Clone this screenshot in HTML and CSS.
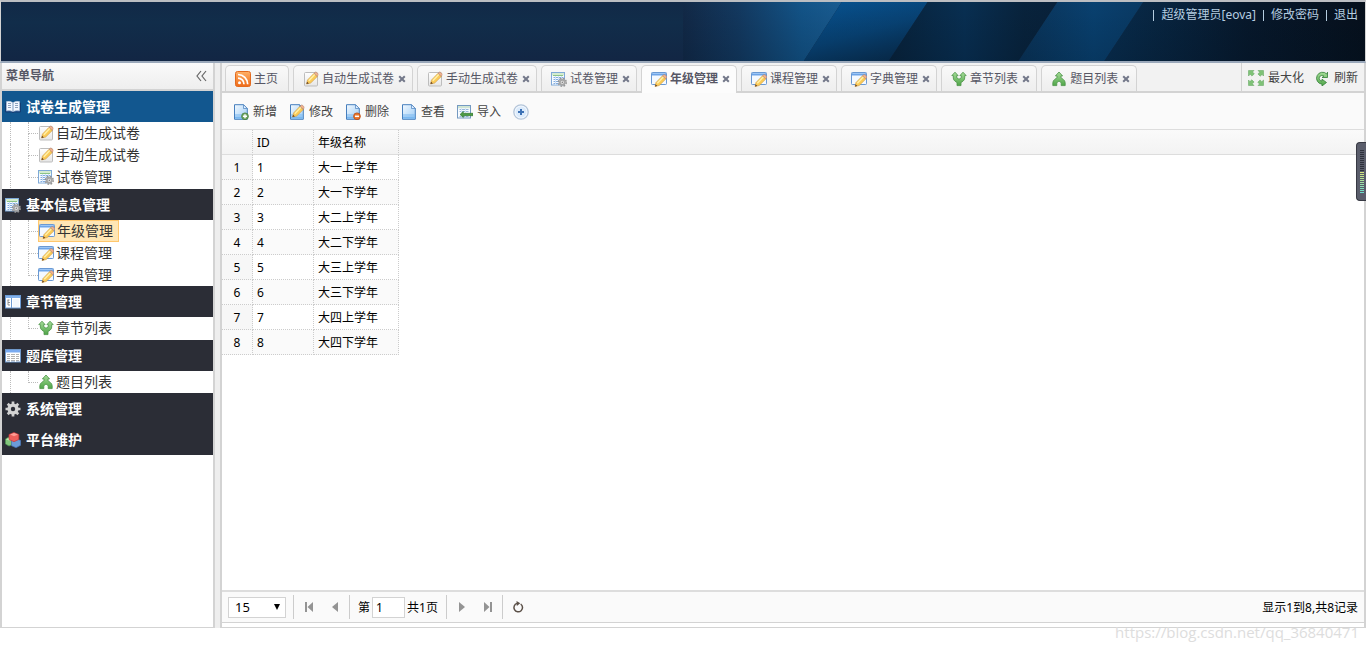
FILE: index.html
```html
<!DOCTYPE html>
<html lang="zh-CN">
<head>
<meta charset="utf-8">
<title>年级管理</title>
<link rel="stylesheet" href="styles.css">
</head>
<body>
<svg class="sprite" aria-hidden="true">
  <defs>
    <linearGradient id="g-paper" x1="0" y1="0" x2="0" y2="1"><stop offset="0" stop-color="#fff"/><stop offset="1" stop-color="#e6e6e6"/></linearGradient>
    <linearGradient id="g-blue" x1="0" y1="0" x2="1" y2="1"><stop offset="0" stop-color="#f2f9ff"/><stop offset="1" stop-color="#9ccbf5"/></linearGradient>
    <linearGradient id="g-green" x1="0" y1="0" x2="0" y2="1"><stop offset="0" stop-color="#a5dc98"/><stop offset="1" stop-color="#4fa548"/></linearGradient>
    <linearGradient id="g-orange" x1="0" y1="0" x2="0" y2="1"><stop offset="0" stop-color="#ffb168"/><stop offset="1" stop-color="#ee6a18"/></linearGradient>
  </defs>
  <symbol id="pencil" viewBox="0 0 16 16">
    <path d="M4 15 5 11 11.500 4.300l3.300 3.200L8.200 14z" fill="#fbcb58" stroke="#cf9a41" stroke-width=".6"/>
    <path d="m6.300 11.700 6.200-6.400" stroke="#fff0a8" stroke-width="1.500"/>
    <path d="m11.500 4.300 1.200-1.100q.7-.5 1.400.1l1.500 1.500q.5.700 0 1.400l-.8 1.300z" fill="#efb08e" stroke="#a97c66" stroke-width=".5"/>
    <path d="M4 15l.6-2.300 1.800 1.700z" fill="#664328"/>
  </symbol>
  <symbol id="note" viewBox="0 0 16 16">
    <rect x="1.500" y="1.500" width="13" height="13.500" rx="1" fill="url(#g-paper)" stroke="#bdbdbd"/>
    <use href="#pencil" transform="translate(-.5 -2)"/>
  </symbol>
  <symbol id="tablegear" viewBox="0 0 16 16">
    <rect x=".5" y="1.500" width="13" height="12.500" fill="#f7fbff" stroke="#7fa9d8"/>
    <path d="M1 2h12v2.500H1z" fill="#d4ecd0"/><path d="M2 4.500h10" stroke="#8cc487"/>
    <path d="M2.500 6.500h10M2.500 8.500h10M2.500 10.500h10M2.500 12.500h10" stroke="#83ade0"/><path d="M4.500 5v9M7.500 5v9M10.500 5v9" stroke="#cfe1f6"/>
    <circle cx="11.300" cy="11.300" r="3.900" fill="none" stroke="#949494" stroke-width="1.600" stroke-dasharray="1.700 1.360"/>
    <circle cx="11.300" cy="11.300" r="2.500" fill="#eee" stroke="#a6a6a6" stroke-width="1.900"/><circle cx="11.300" cy="11.300" r=".8" fill="#777"/>
  </symbol>
  <symbol id="winedit" viewBox="0 0 16 16">
    <rect x=".5" y="1.500" width="15" height="12" rx=".8" fill="#f4f9ff" stroke="#6a99d3"/>
    <path d="M1 2h14v2.500H1z" fill="#6ea5e8"/><path d="M1.500 2.500h13" stroke="#9dc6f5"/>
    <use href="#pencil" transform="translate(0 .5)"/>
  </symbol>
  <symbol id="book" viewBox="0 0 16 16">
    <path d="M.5 4v9h6.300l1.200.8 1.200-.8h6.300V4z" fill="#315f9c" stroke="#143d73"/>
    <path d="M1.500 2.500Q5 1.800 7.700 3.500v9Q5 11 1.500 11.800zM14.500 2.500Q11 1.800 8.300 3.500v9Q11 11 14.500 11.800z" fill="#f4f8ff" stroke="#b9c9dd" stroke-width=".5"/>
    <path d="M3 4.500h3M3 6.500h3M3 8.500h3M10 4.500h3M10 6.500h3M10 8.500h3" stroke="#8ea3be"/>
  </symbol>
  <symbol id="layout" viewBox="0 0 16 16">
    <rect x=".5" y="1.500" width="15" height="12.500" fill="#fff" stroke="#6c9bd4"/><path d="M1 2h14v2H1z" fill="#82b1ec"/>
    <path d="M6.500 4v10" stroke="#6c9bd4"/><path d="M2.500 6h2M3 6v5M3 8.500h2M3 11h2" stroke="#777" stroke-width=".8" fill="none"/>
    <path d="M8 5h6v8H8z" fill="#f2f7fd"/>
  </symbol>
  <symbol id="table" viewBox="0 0 16 16">
    <rect x=".5" y="1.500" width="15" height="12.500" fill="#fff" stroke="#7099ca"/><path d="M1 2h14v2.500H1z" fill="#79aaf0"/>
    <path d="M2 6.500h12M2 8.500h12M2 10.500h12M2 12.500h12" stroke="#b2b2b2"/><path d="M5.500 5v9M10.500 5v9" stroke="#fff"/>
  </symbol>
  <symbol id="gear" viewBox="0 0 16 16">
    <path d="M8 .5v15M.5 8h15M2.700 2.700l10.600 10.600M13.300 2.700 2.700 13.300" stroke="#cfcfcf" stroke-width="2.700"/>
    <circle cx="8" cy="8" r="4" fill="none" stroke="#d4d4d4" stroke-width="3.200"/><circle cx="8" cy="8" r="2.200" fill="#2b2d36"/>
  </symbol>
  <symbol id="bricks" viewBox="0 0 16 16">
    <path d="m.5 7 3.500-2 3.500 2v5.500L4 14 .5 12z" fill="#83c67c" stroke="#4c9650" stroke-width=".7"/><path d="m1 7.200 3-1.500 3 1.500-3 1.300z" fill="#c5ebbb"/>
    <path d="m6.500 8.500 4.500-2 4.700 2v4.800L11 15.700l-4.500-2z" fill="#6c9bd8" stroke="#4270b0" stroke-width=".7"/>
    <path d="m4 2.500 5-2 4.800 2v5L9 9.700 4 7.500z" fill="#ee5f5b" stroke="#c43a3e" stroke-width=".7"/><path d="m5 2.600 4-1.500 4 1.500-4 1.700z" fill="#ff9c93"/>
  </symbol>
  <symbol id="split" viewBox="0 0 16 16">
    <path d="M4 1.200.8 4.600h1.500V7q0 2 1.700 3.200l2 1.400v3h4v-3l2-1.400q1.700-1.200 1.700-3.200V4.600h1.500L12 1.200 8.900 4.600h1.400v2L8 8.300 5.700 6.600v-2h1.400z" fill="url(#g-green)" stroke="#4b9348" stroke-width=".8" stroke-linejoin="round"/>
  </symbol>
  <symbol id="merge" viewBox="0 0 16 16">
    <path d="m8 1 3.600 3.900H10v1.800l2.300 1.700q1.900 1.400 1.900 3.600v2.600h-4V12.300q0-.6-.6-1L8 10l-1.600 1.300q-.6.400-.6 1v2.300h-4V12q0-2.200 1.900-3.600L6 6.700V4.900H4.400z" fill="url(#g-green)" stroke="#4b9348" stroke-width=".8" stroke-linejoin="round"/>
  </symbol>
  <symbol id="rss" viewBox="0 0 16 16">
    <rect x=".5" y=".5" width="15" height="15" rx="2" fill="url(#g-orange)" stroke="#e36a1e"/>
    <circle cx="4.500" cy="11.700" r="1.500" fill="#fff"/><path d="M3 7.200a6 6 0 0 1 6 6M3 3.500a9.700 9.700 0 0 1 9.700 9.700" fill="none" stroke="#fff" stroke-width="1.700"/>
  </symbol>
  <symbol id="page" viewBox="0 0 16 16">
    <path d="M1.500.7h9l3.800 3.800v10.800H1.500z" fill="url(#g-blue)" stroke="#477fbd"/><path d="M10.500.7v3.800h3.800z" fill="#e4f1ff" stroke="#477fbd" stroke-width=".7"/>
    <path d="M2 10.500h12v1H2zM2 12.500h12v2.300H2z" fill="#7ab8f0"/>
  </symbol>
  <symbol id="pageadd" viewBox="0 0 16 16">
    <use href="#page"/><circle cx="12" cy="12.300" r="3.400" fill="#73a865" stroke="#477f3f" stroke-width=".8"/><path d="M12 10.300v4M10 12.300h4" stroke="#fff" stroke-width="1.400"/>
  </symbol>
  <symbol id="pageedit" viewBox="0 0 16 16"><use href="#page"/><use href="#pencil" transform="translate(-.5 -2)"/></symbol>
  <symbol id="pagedel" viewBox="0 0 16 16">
    <use href="#page"/><circle cx="12" cy="12.300" r="3.400" fill="#e9742b" stroke="#b84e18" stroke-width=".8"/><path d="M10 12.300h4" stroke="#fff" stroke-width="1.500"/>
  </symbol>
  <symbol id="import" viewBox="0 0 16 16">
    <rect x=".5" y="1.500" width="13" height="12.500" fill="#f7fbff" stroke="#7499c1"/><path d="M1 2h12v2.200H1z" fill="#cfe5d4"/>
    <path d="M2.500 5.500h9M2.500 7.500h9M2.500 12.500h9" stroke="#97b8dd"/><path d="M4.500 4v9M8.500 4v9" stroke="#d9e7f7"/>
    <path d="M3 10.500 6.300 7.500v1.800H16v2.400H6.300v1.800z" fill="#4d9b43" stroke="#2c712b" stroke-width=".6"/>
  </symbol>
  <symbol id="plus" viewBox="0 0 16 16">
    <circle cx="8" cy="8" r="7.200" fill="#f3f8fe" stroke="#b4c5d9" stroke-width="1.300"/><circle cx="8" cy="8" r="5.500" fill="#dcebfb"/><path d="M8 5v6M5 8h6" stroke="#3e72b5" stroke-width="2"/>
  </symbol>
  <symbol id="expand" viewBox="0 0 16 16">
    <path d="M.5.500H6L4.500 2 6.300 3.800 4 6.100 2.200 4.300.5 6zM15.500.500V6L14 4.500l-1.800 1.700L9.900 3.900l1.800-1.700L10 .5zM.5 15.500V10L2 11.500l1.800-1.700 2.300 2.300-1.800 1.700L6 15.500zM15.500 15.500H10l1.500-1.500-1.700-1.800 2.300-2.300 1.700 1.800 1.700-1.700z" fill="#7fc277" stroke="#5ca35a" stroke-width=".5"/>
  </symbol>
  <symbol id="reload" viewBox="0 0 16 16">
    <path d="M12.800 4A6 6 0 1 0 8 14.200V16l4.500-3.500L8 9.200V11a2.800 2.800 0 1 1 1.900-4.900L8 7.500h5.500V2.200z" fill="url(#g-green)" stroke="#317f36" stroke-width=".8" stroke-linejoin="round"/>
  </symbol>
  <symbol id="close" viewBox="0 0 8 8"><path d="m1.200 1.200 5.600 5.600M6.800 1.200 1.200 6.800" stroke="#737889" stroke-width="2"/></symbol>
  <symbol id="collapse" viewBox="0 0 12 12"><path d="M6 1 2 6l4 5M11 1 7 6l4 5" fill="none" stroke="#666" stroke-width="1.200"/></symbol>
  <symbol id="first" viewBox="0 0 12 12"><path d="M2 1h2v10H2zM10 1v10L4.500 6z" fill="#949494"/></symbol>
  <symbol id="prev" viewBox="0 0 12 12"><path d="M9 1v10L3 6z" fill="#949494"/></symbol>
  <symbol id="next" viewBox="0 0 12 12"><path d="M3 1v10l6-5z" fill="#949494"/></symbol>
  <symbol id="last" viewBox="0 0 12 12"><path d="M8 1h2v10H8zM2 1v10l5.500-5z" fill="#949494"/></symbol>
  <symbol id="again" viewBox="0 0 12 12"><path d="M8.700 3A4.300 4.300 0 1 1 5 2.400" fill="none" stroke="#5b5048" stroke-width="1.500"/><path d="M4.500 0 8.300 2.300 4.800 5z" fill="#5b5048"/></symbol>
</svg>

<header class="banner">
  <svg class="banner-art" viewBox="0 0 683 60" preserveAspectRatio="none" aria-hidden="true">
    <defs>
      <linearGradient id="b1"><stop offset="0" stop-color="#122947"/><stop offset=".35" stop-color="#133960"/><stop offset=".75" stop-color="#135488"/><stop offset="1" stop-color="#1a5c91"/></linearGradient>
      <linearGradient id="b2" x1=".2" y1="0" x2=".8" y2="1"><stop offset="0" stop-color="#07518e"/><stop offset=".5" stop-color="#084477"/><stop offset="1" stop-color="#082c4d"/></linearGradient>
      <linearGradient id="b3"><stop offset="0" stop-color="#08223a"/><stop offset=".45" stop-color="#082f52"/><stop offset=".8" stop-color="#08233c"/><stop offset="1" stop-color="#08213a"/></linearGradient>
      <linearGradient id="b4"><stop offset="0" stop-color="#0a3358"/><stop offset=".6" stop-color="#094170"/><stop offset="1" stop-color="#093a64"/></linearGradient>
      <linearGradient id="b5"><stop offset="0" stop-color="#082d4e"/><stop offset=".55" stop-color="#07182b"/><stop offset="1" stop-color="#06101c"/></linearGradient>
      <linearGradient id="shade" x1="0" y1="0" x2="0" y2="1"><stop offset="0" stop-color="#001020" stop-opacity="0"/><stop offset="1" stop-color="#001020" stop-opacity=".2"/></linearGradient>
    </defs>
    <path d="M0 0h159l-38 60H0z" fill="url(#b1)"/>
    <path d="M159 0h86l-39 60h-85z" fill="url(#b2)"/>
    <path d="M245 0h130l-39 60H206z" fill="url(#b3)"/>
    <path d="M375 0h86l-39 60h-86z" fill="url(#b4)"/>
    <path d="M461 0h222v60H422z" fill="url(#b5)"/>
    <path d="M0 0h683v60H0z" fill="url(#shade)"/>
  </svg>
  <nav class="account">
    <a href="#">超级管理员[eova]</a>
    <a href="#">修改密码</a>
    <a href="#">退出</a>
  </nav>
</header>

<div class="workspace">
  <aside class="sidebar">
    <div class="side-title"><h2>菜单导航</h2><button class="plain" aria-label="收起"><svg class="small"><use href="#collapse"/></svg></button></div>
    <nav class="menu">
      <section class="group">
        <button class="group-head current"><svg class="icon"><use href="#book"/></svg>试卷生成管理</button>
        <ul class="tree">
          <li><span class="trunk"></span><span class="branch"></span><a href="#"><svg class="icon"><use href="#note"/></svg>自动生成试卷</a></li>
          <li><span class="trunk"></span><span class="branch"></span><a href="#"><svg class="icon"><use href="#note"/></svg>手动生成试卷</a></li>
          <li><span class="trunk"></span><span class="branch"></span><a href="#"><svg class="icon"><use href="#tablegear"/></svg>试卷管理</a></li>
        </ul>
      </section>
      <section class="group">
        <button class="group-head"><svg class="icon"><use href="#tablegear"/></svg>基本信息管理</button>
        <ul class="tree">
          <li><span class="trunk"></span><span class="branch"></span><a class="selected" href="#"><svg class="icon"><use href="#winedit"/></svg>年级管理</a></li>
          <li><span class="trunk"></span><span class="branch"></span><a href="#"><svg class="icon"><use href="#winedit"/></svg>课程管理</a></li>
          <li><span class="trunk"></span><span class="branch"></span><a href="#"><svg class="icon"><use href="#winedit"/></svg>字典管理</a></li>
        </ul>
      </section>
      <section class="group">
        <button class="group-head"><svg class="icon"><use href="#layout"/></svg>章节管理</button>
        <ul class="tree">
          <li><span class="trunk"></span><span class="branch"></span><a href="#"><svg class="icon"><use href="#split"/></svg>章节列表</a></li>
        </ul>
      </section>
      <section class="group">
        <button class="group-head"><svg class="icon"><use href="#table"/></svg>题库管理</button>
        <ul class="tree">
          <li><span class="trunk"></span><span class="branch"></span><a href="#"><svg class="icon"><use href="#merge"/></svg>题目列表</a></li>
        </ul>
      </section>
      <section class="group"><button class="group-head"><svg class="icon"><use href="#gear"/></svg>系统管理</button></section>
      <section class="group"><button class="group-head"><svg class="icon"><use href="#bricks"/></svg>平台维护</button></section>
    </nav>
  </aside>

  <main class="content">
    <div class="tabbar">
      <ul class="tabs">
        <li class="tab home"><a href="#"><svg class="icon"><use href="#rss"/></svg>主页</a></li>
        <li class="tab"><a href="#"><svg class="icon"><use href="#note"/></svg>自动生成试卷</a><button class="plain" aria-label="关闭"><svg class="x"><use href="#close"/></svg></button></li>
        <li class="tab"><a href="#"><svg class="icon"><use href="#note"/></svg>手动生成试卷</a><button class="plain" aria-label="关闭"><svg class="x"><use href="#close"/></svg></button></li>
        <li class="tab"><a href="#"><svg class="icon"><use href="#tablegear"/></svg>试卷管理</a><button class="plain" aria-label="关闭"><svg class="x"><use href="#close"/></svg></button></li>
        <li class="tab active"><a href="#"><svg class="icon"><use href="#winedit"/></svg>年级管理</a><button class="plain" aria-label="关闭"><svg class="x"><use href="#close"/></svg></button></li>
        <li class="tab"><a href="#"><svg class="icon"><use href="#winedit"/></svg>课程管理</a><button class="plain" aria-label="关闭"><svg class="x"><use href="#close"/></svg></button></li>
        <li class="tab"><a href="#"><svg class="icon"><use href="#winedit"/></svg>字典管理</a><button class="plain" aria-label="关闭"><svg class="x"><use href="#close"/></svg></button></li>
        <li class="tab"><a href="#"><svg class="icon"><use href="#split"/></svg>章节列表</a><button class="plain" aria-label="关闭"><svg class="x"><use href="#close"/></svg></button></li>
        <li class="tab"><a href="#"><svg class="icon"><use href="#merge"/></svg>题目列表</a><button class="plain" aria-label="关闭"><svg class="x"><use href="#close"/></svg></button></li>
      </ul>
      <div class="tab-tools">
        <button class="plain"><svg class="icon"><use href="#expand"/></svg>最大化</button>
        <button class="plain"><svg class="icon"><use href="#reload"/></svg>刷新</button>
      </div>
    </div>

    <div class="toolbar">
      <button class="plain"><svg class="icon"><use href="#pageadd"/></svg>新增</button>
      <button class="plain"><svg class="icon"><use href="#pageedit"/></svg>修改</button>
      <button class="plain"><svg class="icon"><use href="#pagedel"/></svg>删除</button>
      <button class="plain"><svg class="icon"><use href="#page"/></svg>查看</button>
      <button class="plain"><svg class="icon"><use href="#import"/></svg>导入</button>
      <button class="plain" aria-label="更多"><svg class="icon"><use href="#plus"/></svg></button>
    </div>

    <div class="grid">
      <table>
        <colgroup><col class="c-num"><col class="c-id"><col class="c-name"><col></colgroup>
        <thead><tr><th></th><th>ID</th><th>年级名称</th><th></th></tr></thead>
        <tbody>
          <tr><td>1</td><td>1</td><td>大一上学年</td></tr>
          <tr><td>2</td><td>2</td><td>大一下学年</td></tr>
          <tr><td>3</td><td>3</td><td>大二上学年</td></tr>
          <tr><td>4</td><td>4</td><td>大二下学年</td></tr>
          <tr><td>5</td><td>5</td><td>大三上学年</td></tr>
          <tr><td>6</td><td>6</td><td>大三下学年</td></tr>
          <tr><td>7</td><td>7</td><td>大四上学年</td></tr>
          <tr><td>8</td><td>8</td><td>大四下学年</td></tr>
        </tbody>
      </table>
    </div>

    <footer class="pager">
      <span class="size"><select aria-label="每页条数"><option>15</option></select></span>
      <div class="pager-part">
        <button class="plain" aria-label="首页"><svg class="small"><use href="#first"/></svg></button>
        <button class="plain" aria-label="上一页"><svg class="small"><use href="#prev"/></svg></button>
      </div>
      <div class="pager-part page-no">
        <label for="page">第</label><input id="page" type="text" value="1"><span>共1页</span>
      </div>
      <div class="pager-part">
        <button class="plain" aria-label="下一页"><svg class="small"><use href="#next"/></svg></button>
        <button class="plain" aria-label="末页"><svg class="small"><use href="#last"/></svg></button>
      </div>
      <div class="pager-part">
        <button class="plain" aria-label="刷新"><svg class="small"><use href="#again"/></svg></button>
      </div>
      <span class="summary">显示1到8,共8记录</span>
    </footer>
  </main>
</div>
<div class="meter" aria-hidden="true"><span></span></div>
<div class="watermark">https://blog.csdn.net/qq_36840471</div>
</body>
</html>
```

FILE: styles.css
```css
* { box-sizing: border-box; }

body {
  margin: 0;
  height: 100vh;
  padding-bottom: 22px;
  display: flex;
  flex-direction: column;
  background: #fff;
  color: #000;
  font: 12px/20px "Noto Sans", "Noto Sans CJK SC", sans-serif;
}

a { color: inherit; text-decoration: none; }
ul { list-style: none; margin: 0; padding: 0; }
button, input, select { font: inherit; color: inherit; }
.plain { padding: 0; border: 0; background: none; display: flex; align-items: center; justify-content: center; gap: 4px; }

.sprite { position: absolute; width: 0; height: 0; }
.icon { width: 16px; height: 16px; flex: none; }
.small { width: 12px; height: 12px; flex: none; }
.x { width: 8px; height: 8px; }

/* Banner */
.banner {
  position: relative;
  flex: none;
  height: 63px;
  border: 1px solid #d3d3d3;
  border-top: 2px solid #bcbec2;
  border-bottom: 2px solid #9aa8ba;
  background: linear-gradient(#122947, #112d4a 35%, #122644);
}
.banner-art { position: absolute; top: 0; right: 0; width: 50%; height: 100%; }
.account { position: relative; display: flex; justify-content: flex-end; padding: 3px 7px 0 0; color: #b5cde0; }
.account a { display: flex; align-items: center; }
.account a::before { content: ""; width: 1px; height: 11px; margin: 0 7px; background: #b5cde0; }

/* Frame */
.workspace { flex: 1; min-height: 0; display: flex; gap: 5px; background: #eee; }
.sidebar { width: 215px; flex: none; border: 2px solid #d3d3d3; border-top-width: 0; border-bottom-width: 1px; background: #fff; }
.side-title {
  height: 28px;
  padding: 0 6px 0 4px;
  display: flex;
  align-items: center;
  justify-content: space-between;
  border-bottom: 2px solid #d3d3d3;
  background: linear-gradient(#fafafa, #eee);
}
.side-title h2 { margin: 0; font-size: 12px; line-height: 22px; color: #575765; }

/* Menu */
.group-head {
  width: 100%;
  height: 31px;
  padding: 0 3px;
  display: flex;
  align-items: center;
  gap: 5px;
  border: 0;
  background: #2b2d36;
  color: #fff;
  font-size: 14px;
  font-weight: bold;
}
.group-head.current { background: #12578f; }
.tree { font-size: 14px; color: #333; }
.group:nth-child(odd) .tree { padding-bottom: 1px; }
.tree li { display: flex; height: 22px; padding-left: 8px; }
.trunk { width: 18px; border-left: 1px dotted #bbb; }
.branch { width: 10px; }
.branch::before, .branch::after { content: ""; display: block; height: 11px; border-left: 1px dotted #bbb; }
.branch::before { border-bottom: 1px dotted #bbb; }
.tree li:last-child .branch::after { border: 0; }
.tree a { display: flex; align-items: center; gap: 2px; }
.tree .selected { padding-right: 5px; border: 1px solid #ffc76d; background: #ffe6b4; }

/* Tabs */
.content { flex: 1; min-width: 0; display: flex; flex-direction: column; border: solid #d3d3d3; border-width: 0 2px 1px 2px; padding-bottom: 4px; background: #fff; }
.tabbar { flex: none; height: 30px; display: flex; justify-content: space-between; border-bottom: 2px solid #d3d3d3; background: #f2f2f2; }
.tabs { display: flex; align-items: flex-end; gap: 4px; padding-left: 3px; color: #575765; }
.tab {
  height: 26px;
  padding: 0 6px 0 9px;
  display: flex;
  align-items: center;
  gap: 4px;
  border: 1px solid #d3d3d3;
  border-bottom: 0;
  border-radius: 5px 5px 0 0;
  background: linear-gradient(#f9f9f9, #eee);
}
.tab.home { padding-right: 10px; }
.tab a { display: flex; align-items: center; gap: 3px; white-space: nowrap; }
.tab.active { height: 28px; margin-bottom: -2px; padding-bottom: 2px; background: #fcfcfc; font-weight: bold; }
.tab-tools { display: flex; gap: 10px; padding: 2px 6px 0; border-left: 1px solid #d3d3d3; color: #444; }

/* Toolbar */
.toolbar { flex: none; height: 37px; padding: 1px 11px 0; display: flex; gap: 12px; border-bottom: 1px solid #ddd; background: #fafafa; color: #444; }

/* Grid */
.grid { flex: 1; min-height: 0; overflow: auto; }
table { width: 100%; table-layout: fixed; border-collapse: separate; border-spacing: 0; }
.c-num { width: 31px; }
.c-id { width: 61px; }
.c-name { width: 85px; }
th, td { height: 25px; padding: 2px 4px 0; text-align: left; font-weight: normal; border-right: 1px dotted #ccc; white-space: nowrap; }
th { border-bottom: 1px solid #ddd; background: linear-gradient(#fafafa, #f3f3f3); }
th:last-child { border-right: 0; }
td { border-bottom: 1px dotted #ccc; }
tbody tr:nth-child(even) td { background: #fafafa; }
td:first-child { padding: 2px 0 0; text-align: center; background: #f7f7f7; }

/* Pager */
.pager { flex: none; height: 33px; padding-left: 6px; display: flex; align-items: center; border-top: 2px solid #ddd; border-bottom: 1px solid #d3d3d3; background: #fafafa; }
.size { position: relative; margin-right: 7px; }
.size::after { content: ""; position: absolute; right: 6px; top: 7px; border: solid transparent; border-width: 6px 3px 0; border-top-color: #000; }
.size select { display: block; width: 58px; height: 21px; padding: 0 6px; border: 1px solid #d3d3d3; border-radius: 0; background: #fff; appearance: none; font-size: 13px; line-height: 19px; }
.pager-part { display: flex; align-items: center; height: 24px; padding: 0 1px 0 2px; border-left: 1px solid #ccc; }
.pager-part .plain { width: 26px; height: 24px; }
.page-no { padding: 0 8px; gap: 2px; }
.page-no label, .page-no span, .summary { line-height: 22px; padding-top: 1px; }
.page-no input { width: 33px; height: 21px; padding: 0 3px; border: 1px solid #d3d3d3; background: #fff; }
.summary { margin-left: auto; padding-right: 6px; }

/* Floating level meter */
.meter { position: absolute; right: 0; top: 142px; width: 10px; height: 59px; padding: 7px 2px 6px 3px; border: 1px solid #373943; border-right: 0; border-radius: 4px 0 0 4px; background: #5a5d6b; }
.meter span { display: block; height: 100%; background: repeating-linear-gradient(transparent 0 1px, #5a5d6b 1px 2px), linear-gradient(#2d303b 48%, #dce779 48%, #66dbd0); }

.watermark { position: absolute; right: 7px; bottom: 8px; color: #ddd; font: 15px/20px "Open Sans", sans-serif; }
```
